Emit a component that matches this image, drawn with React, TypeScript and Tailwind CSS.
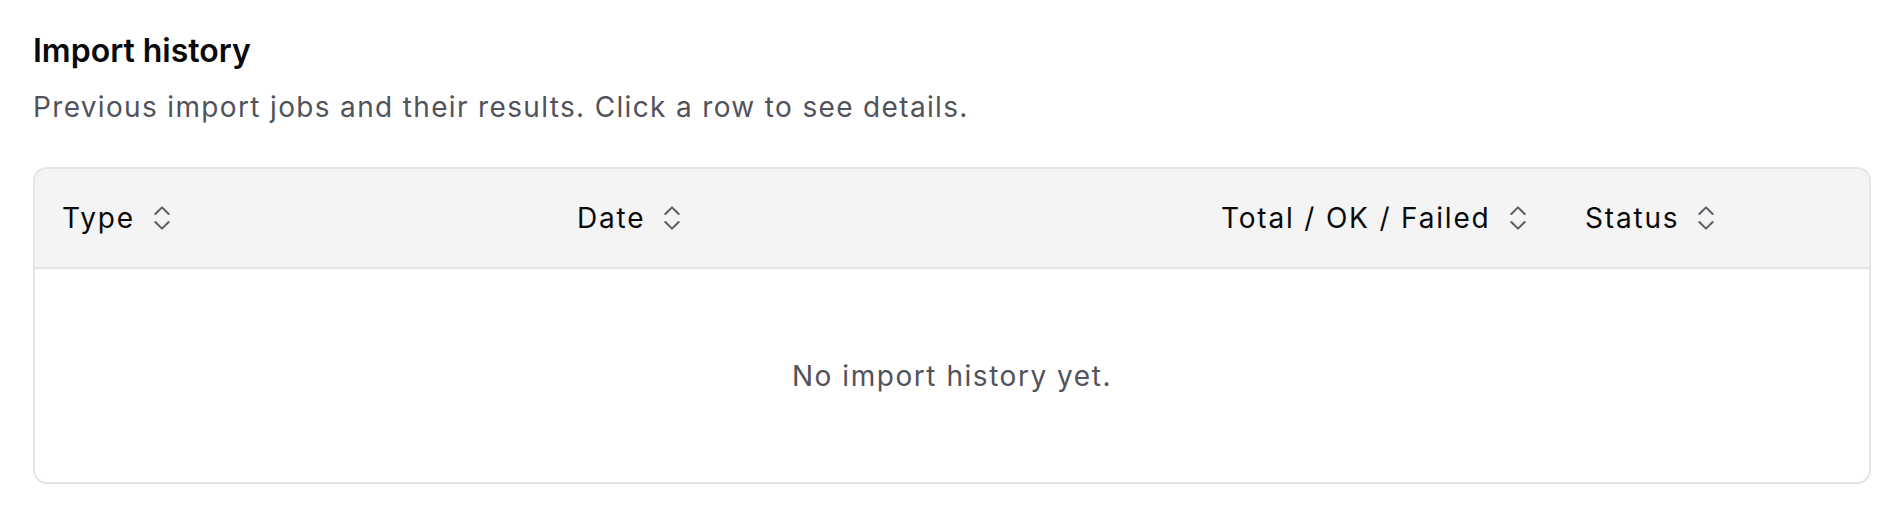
import { ChevronsUpDown } from "lucide-react";

const columns = [
  { label: "Type" },
  { label: "Date" },
  { label: "Total / OK / Failed" },
  { label: "Status" },
];

function SortHeader({ label }: { label: string }) {
  return (
    <button type="button" className="flex items-center gap-[11px] text-[28px] leading-[40px] tracking-[0.065em] text-[#0a0a0a]">
      <span>{label}</span>
      <ChevronsUpDown className="h-8 w-8 text-[#5c5c66]" strokeWidth={1.5} />
    </button>
  );
}

export default function App() {
  return (
    <div className="min-h-[518px] bg-white px-[33px] pt-[31px] font-['Inter',sans-serif]">
      <h2 className="text-[32px] font-semibold leading-[40px] text-[#0a0a0a]">Import history</h2>
      <p className="mt-[16px] text-[28px] leading-[40px] tracking-[0.048em] text-[#52525b]">
        Previous import jobs and their results. Click a row to see details.
      </p>

      <div className="mt-[40px] overflow-hidden rounded-[14px] border-2 border-[#e4e4e7]">
        <div className="grid h-[100px] grid-cols-[515px_644px_364px_1fr] items-center border-b-2 border-[#e4e4e7] bg-[#f4f4f5]">
          {columns.map((col) => (
            <div key={col.label} className="pl-[27px]">
              <SortHeader label={col.label} />
            </div>
          ))}
        </div>
        <div className="flex h-[213px] items-center justify-center text-[28px] tracking-[0.055em] text-[#52525b]">
          No import history yet.
        </div>
      </div>
    </div>
  );
}
